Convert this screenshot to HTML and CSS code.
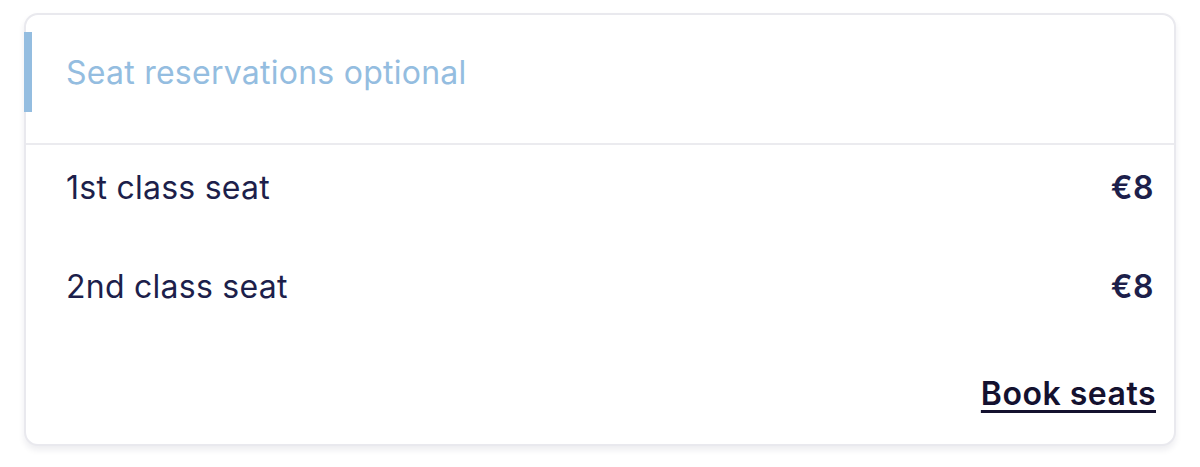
FILE: index.html
```html
<!DOCTYPE html>
<html lang="en">
<head>
<meta charset="utf-8">
<title>Seat reservations</title>
<link rel="stylesheet" href="styles.css">
</head>
<body>
<section class="card">
  <header class="card-header">
    <h2 class="card-title">Seat reservations optional</h2>
  </header>
  <ul class="seat-list">
    <li class="seat-row"><span class="seat-name">1st class seat</span><span class="seat-price">€8</span></li>
    <li class="seat-row"><span class="seat-name">2nd class seat</span><span class="seat-price">€8</span></li>
  </ul>
  <div class="card-actions">
    <a class="book-link" href="#">Book seats</a>
  </div>
</section>
</body>
</html>
```
FILE: styles.css
```css
html, body {
  margin: 0;
  background: #ffffff;
}
body {
  padding: 13px 24px 21px;
  font-family: Inter, "Noto Sans", sans-serif;
}
.card {
  box-sizing: border-box;
  height: 433px;
  border: 2px solid #e9e9ee;
  border-radius: 14px;
  background: #ffffff;
  box-shadow: 0 4px 6px rgba(20, 20, 60, 0.08);
  padding-top: 17px;
  display: flex;
  flex-direction: column;
}
.card-header {
  height: 80px;
  margin-left: -2px;
  border-left: 8px solid #94bde0;
  padding-left: 34px;
  display: flex;
  align-items: center;
  margin-bottom: 31px;
}
.card-title {
  margin: 0;
  font-size: 32px;
  font-weight: 400;
  color: #94bde0;
  letter-spacing: 0.25px;
}
.seat-list {
  list-style: none;
  margin: 0;
  padding: 0 20px 0 40px;
  border-top: 2px solid #ebebef;
}
.seat-row {
  display: flex;
  justify-content: space-between;
  align-items: center;
  height: 99px;
  font-size: 32px;
  letter-spacing: 0.25px;
  color: #1d1f4b;
}
.seat-row:first-child {
  margin-top: -7px;
}
.seat-price {
  font-weight: 600;
  letter-spacing: 0.5px;
}
.card-actions {
  display: flex;
  justify-content: flex-end;
  padding: 38px 18px 0;
}
.book-link {
  font-size: 32px;
  font-weight: 600;
  letter-spacing: 0.5px;
  color: #14112f;
  text-decoration: underline;
  text-decoration-thickness: 3px;
  text-underline-offset: 5px;
}
```
